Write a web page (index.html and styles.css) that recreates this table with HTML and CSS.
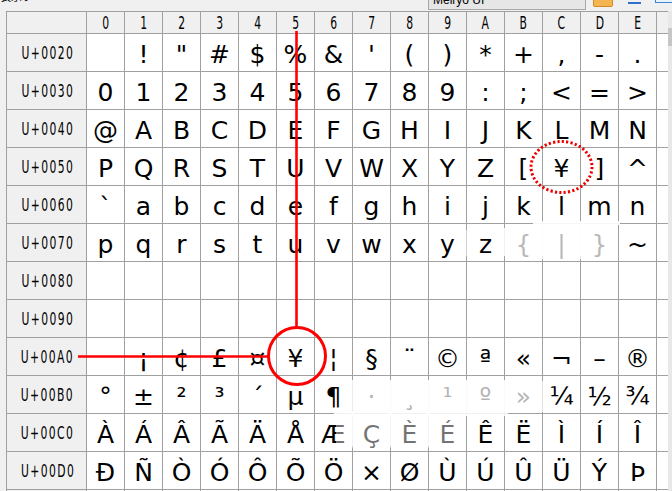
FILE: index.html
```
<!DOCTYPE html>
<html lang="ja">
<head>
<meta charset="utf-8">
<title>文字コード表</title>
<link rel="stylesheet" href="styles.css">
</head>
<body>
<div class="toolbar">
  <span class="crumb">表示フォント</span>
  <div class="dropdown">Meiryo UI</div>
  <span class="tool tool-orange"></span>
  <span class="tool tool-arrow"></span>
  <span class="tool tool-blue"></span>
</div>
<div class="main">
  <div class="chart-wrap">
    <div class="chart">
      <div class="h"></div><div class="h"><span>0</span></div><div class="h"><span>1</span></div><div class="h"><span>2</span></div><div class="h"><span>3</span></div><div class="h"><span>4</span></div><div class="h"><span>5</span></div><div class="h"><span>6</span></div><div class="h"><span>7</span></div><div class="h"><span>8</span></div><div class="h"><span>9</span></div><div class="h"><span>A</span></div><div class="h"><span>B</span></div><div class="h"><span>C</span></div><div class="h"><span>D</span></div><div class="h"><span>E</span></div><div class="h"></div>

      <div class="l"><span>U+0020</span></div><div class="c"></div><div class="c">!</div><div class="c">&quot;</div><div class="c">#</div><div class="c">$</div><div class="c">%</div><div class="c">&amp;</div><div class="c">'</div><div class="c">(</div><div class="c">)</div><div class="c">*</div><div class="c">+</div><div class="c">,</div><div class="c">-</div><div class="c">.</div><div class="c"></div>

      <div class="l"><span>U+0030</span></div><div class="c">0</div><div class="c">1</div><div class="c">2</div><div class="c">3</div><div class="c">4</div><div class="c">5</div><div class="c">6</div><div class="c">7</div><div class="c">8</div><div class="c">9</div><div class="c">:</div><div class="c">;</div><div class="c">&lt;</div><div class="c">=</div><div class="c">&gt;</div><div class="c"></div>

      <div class="l"><span>U+0040</span></div><div class="c">@</div><div class="c">A</div><div class="c">B</div><div class="c">C</div><div class="c">D</div><div class="c">E</div><div class="c">F</div><div class="c">G</div><div class="c">H</div><div class="c">I</div><div class="c">J</div><div class="c">K</div><div class="c">L</div><div class="c">M</div><div class="c">N</div><div class="c"></div>

      <div class="l"><span>U+0050</span></div><div class="c">P</div><div class="c">Q</div><div class="c">R</div><div class="c">S</div><div class="c">T</div><div class="c">U</div><div class="c">V</div><div class="c">W</div><div class="c">X</div><div class="c">Y</div><div class="c">Z</div><div class="c">[</div><div class="c yen">¥</div><div class="c">]</div><div class="c">^</div><div class="c"></div>

      <div class="l"><span>U+0060</span></div><div class="c">`</div><div class="c">a</div><div class="c">b</div><div class="c">c</div><div class="c">d</div><div class="c">e</div><div class="c">f</div><div class="c">g</div><div class="c">h</div><div class="c">i</div><div class="c">j</div><div class="c">k</div><div class="c">l</div><div class="c">m</div><div class="c">n</div><div class="c"></div>

      <div class="l"><span>U+0070</span></div><div class="c">p</div><div class="c">q</div><div class="c">r</div><div class="c">s</div><div class="c">t</div><div class="c">u</div><div class="c">v</div><div class="c">w</div><div class="c">x</div><div class="c">y</div><div class="c">z</div><div class="c">{</div><div class="c">|</div><div class="c">}</div><div class="c">~</div><div class="c"></div>

      <div class="l"><span>U+0080</span></div><div class="c"></div><div class="c"></div><div class="c"></div><div class="c"></div><div class="c"></div><div class="c"></div><div class="c"></div><div class="c"></div><div class="c"></div><div class="c"></div><div class="c"></div><div class="c"></div><div class="c"></div><div class="c"></div><div class="c"></div><div class="c"></div>

      <div class="l"><span>U+0090</span></div><div class="c"></div><div class="c"></div><div class="c"></div><div class="c"></div><div class="c"></div><div class="c"></div><div class="c"></div><div class="c"></div><div class="c"></div><div class="c"></div><div class="c"></div><div class="c"></div><div class="c"></div><div class="c"></div><div class="c"></div><div class="c"></div>

      <div class="l"><span>U+00A0</span></div><div class="c"></div><div class="c">¡</div><div class="c">¢</div><div class="c">£</div><div class="c">¤</div><div class="c yen">¥</div><div class="c">¦</div><div class="c">§</div><div class="c">¨</div><div class="c">©</div><div class="c">ª</div><div class="c">«</div><div class="c">¬</div><div class="c">–</div><div class="c">®</div><div class="c"></div>

      <div class="l"><span>U+00B0</span></div><div class="c">°</div><div class="c">±</div><div class="c">²</div><div class="c">³</div><div class="c">´</div><div class="c">µ</div><div class="c">¶</div><div class="c">·</div><div class="c">¸</div><div class="c">¹</div><div class="c">º</div><div class="c">»</div><div class="c">¼</div><div class="c">½</div><div class="c">¾</div><div class="c"></div>

      <div class="l"><span>U+00C0</span></div><div class="c">À</div><div class="c">Á</div><div class="c">Â</div><div class="c">Ã</div><div class="c">Ä</div><div class="c">Å</div><div class="c">Æ</div><div class="c">Ç</div><div class="c">È</div><div class="c">É</div><div class="c">Ê</div><div class="c">Ë</div><div class="c">Ì</div><div class="c">Í</div><div class="c">Î</div><div class="c"></div>

      <div class="l"><span>U+00D0</span></div><div class="c">Ð</div><div class="c">Ñ</div><div class="c">Ò</div><div class="c">Ó</div><div class="c">Ô</div><div class="c">Õ</div><div class="c">Ö</div><div class="c">×</div><div class="c">Ø</div><div class="c">Ù</div><div class="c">Ú</div><div class="c">Û</div><div class="c">Ü</div><div class="c">Ý</div><div class="c">Þ</div><div class="c"></div>

      <div class="l"></div><div class="c"></div><div class="c"></div><div class="c"></div><div class="c"></div><div class="c"></div><div class="c"></div><div class="c"></div><div class="c"></div><div class="c"></div><div class="c"></div><div class="c"></div><div class="c"></div><div class="c"></div><div class="c"></div><div class="c"></div><div class="c"></div>
    </div>
  </div>
  <div class="scrollbar"><div class="thumb"></div></div>
</div>

<svg class="marks" width="672" height="491" viewBox="0 0 672 491" aria-hidden="true">
  <g fill="#ffffff">
    <rect x="505" y="225" width="113" height="34" opacity="0.72"/>
    <rect x="533" y="221" width="87" height="4" opacity="0.9"/>
    <rect x="503" y="228" width="3" height="28" opacity="0.85"/>
    <rect x="541" y="224" width="3" height="32" opacity="0.85"/>
    <rect x="579" y="224" width="3" height="32" opacity="0.85"/>
    <rect x="465" y="230" width="3" height="26" opacity="0.5"/>
    <rect x="353" y="381" width="190" height="31" opacity="0.7"/>
    <rect x="334" y="411" width="174" height="5" opacity="0.85"/>
    <rect x="351" y="380" width="3" height="66" opacity="0.8"/>
    <rect x="389" y="380" width="3" height="66" opacity="0.8"/>
    <rect x="427" y="380" width="3" height="66" opacity="0.8"/>
    <rect x="465" y="380" width="3" height="32" opacity="0.8"/>
    <rect x="503" y="380" width="3" height="32" opacity="0.8"/>
    <rect x="336" y="416" width="130" height="32" opacity="0.45"/>
  </g>
  <line x1="296.5" y1="31" x2="296.5" y2="328" stroke="#ff0000" stroke-width="2.6"/>
  <line x1="78" y1="356.5" x2="269" y2="356.5" stroke="#ff0000" stroke-width="2.6"/>
  <circle cx="297" cy="356" r="28.5" fill="none" stroke="#ff0000" stroke-width="3"/>
  <ellipse cx="561.5" cy="167" rx="30.5" ry="25.5" fill="none" stroke="#ee0000" stroke-width="3" stroke-dasharray="2.2 2.2"/>
</svg>
</body>
</html>
```

FILE: styles.css
```
* { box-sizing: border-box; }
html, body { margin: 0; padding: 0; }
body {
  width: 672px;
  height: 491px;
  overflow: hidden;
  position: relative;
  background: #f0f0f0;
  font-family: "DejaVu Sans", Verdana, sans-serif;
  color: #000;
}

.toolbar {
  height: 11px;
  display: flex;
  align-items: flex-end;
  overflow: hidden;
}
.crumb {
  flex: none;
  width: 30px;
  margin-bottom: 8px;
  font-family: "Noto Sans CJK JP", sans-serif;
  font-size: 11px;
  line-height: 14px;
  white-space: nowrap;
  overflow: hidden;
}
.dropdown {
  flex: none;
  width: 158px;
  height: 20px;
  margin-left: 398px;
  margin-bottom: 1px;
  padding: 2px 4px;
  border: 1px solid #a8a8a8;
  background: #e6e6e6;
  font-family: "Liberation Sans", sans-serif;
  font-size: 12px;
  line-height: 14px;
}
.tool { flex: none; display: block; }
.tool-orange {
  width: 20px; height: 12px;
  margin-left: 7px; margin-bottom: 4px;
  background: #f4b450;
  border: 1px solid #d08a20;
  border-radius: 2px;
}
.tool-arrow {
  width: 13px; height: 2px;
  margin-left: 15px; margin-bottom: 7px;
  background: #2f6fd0;
}
.tool-blue {
  width: 18px; height: 12px;
  margin-left: 14px; margin-bottom: 8px;
  border: 1px solid #3c82d8;
  background: #eaf2fc;
}

.main {
  display: flex;
  height: 480px;
  padding-left: 6px;
}
.chart-wrap {
  width: 662px;
  height: 480px;
  overflow: hidden;
  flex: none;
}
.chart {
  display: grid;
  grid-template-columns: 79px repeat(15, 37px) 11px;
  grid-template-rows: 21px;
  grid-auto-rows: 37px;
  gap: 1px;
  width: max-content;
  background: #a0a0a0;
  border: 1px solid #a0a0a0;
  border-right: 0;
}
.h, .l {
  background: #f0f0f0;
  display: flex;
  align-items: center;
  justify-content: center;
  font-family: "DejaVu Sans", sans-serif;
  font-size: 18px;
  line-height: 20px;
  color: #000;
  overflow: hidden;
}
.h span, .l span {
  display: inline-block;
  transform: scaleX(0.6);
  white-space: nowrap;
}
.l span { letter-spacing: 2.3px; margin-right: -2.3px; }
.c {
  background: #fff;
  text-align: center;
  font-size: 25px;
  line-height: 33px;
  padding-top: 4px;
  overflow: hidden;
  white-space: nowrap;
}

.scrollbar {
  width: 4px;
  height: 480px;
  flex: none;
  background: #e8e8e8;
  padding-top: 17px;
}
.thumb {
  width: 4px;
  height: 18px;
  background: #c6c6c6;
}

.marks {
  position: absolute;
  left: 0;
  top: 0;
  pointer-events: none;
}
```
